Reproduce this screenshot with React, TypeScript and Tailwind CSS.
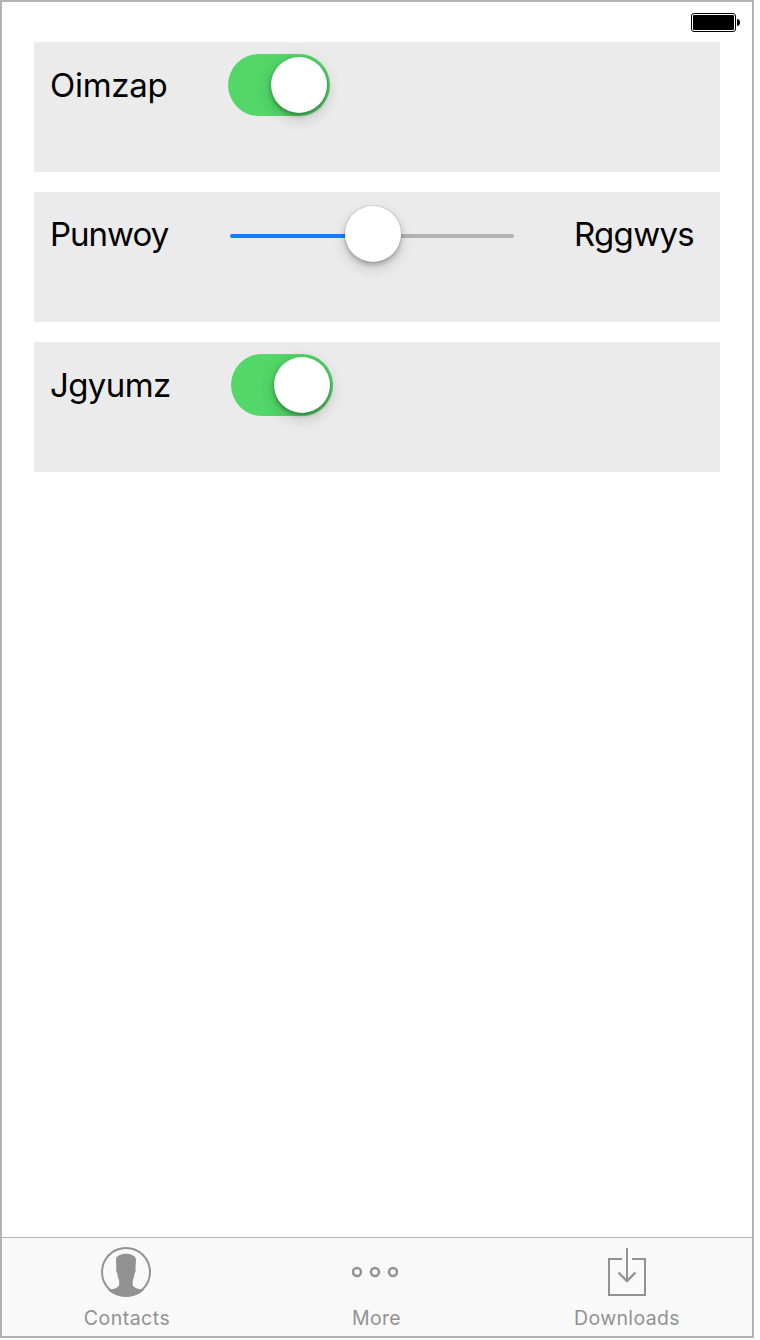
import React from "react";

function Toggle({ className = "" }: { className?: string }) {
  return (
    <div className={`flex h-[62px] w-[102px] shrink-0 items-center justify-end rounded-full bg-[#53d769] pr-[3px] ${className}`}>
      <div className="size-14 rounded-full bg-white shadow-[0_6px_16px_rgba(0,0,0,0.15),0_2px_4px_rgba(0,0,0,0.35),0_0_24px_rgba(0,0,0,0.04)]" />
    </div>
  );
}

function Slider() {
  return (
    <div className="ml-[180px] flex h-14 w-[284px] shrink-0 items-center">
      <div className="mt-1 h-1 w-[115px] rounded-l-full bg-[#157efb]" />
      <div className="z-10 size-14 shrink-0 rounded-full bg-white shadow-[0_6px_16px_rgba(0,0,0,0.15),0_3px_5px_rgba(0,0,0,0.24),0_0_1px_1px_rgba(0,0,0,0.06)]" />
      <div className="mt-1 h-1 flex-1 rounded-r-full bg-[#b2b2b2]" />
    </div>
  );
}

function Battery() {
  return (
    <svg className="h-[19px] w-[49px]" viewBox="0 0 49 19">
      <rect x="0.5" y="0.5" width="44" height="18" rx="2.5" fill="white" stroke="black" />
      <rect x="2" y="2" width="41" height="15" rx="1" fill="black" />
      <path d="M46 6c1.8 0 3 1.5 3 3.5S47.8 13 46 13Z" fill="black" />
    </svg>
  );
}

function ContactsIcon() {
  return (
    <svg className="size-[50px]" viewBox="0 0 50 50" fill="none">
      <circle cx="25" cy="25" r="24" stroke="#929292" strokeWidth="2" />
      <path
        d="M25 6.800C29.500 6.800 34 8.500 34.800 11.500C35.200 14.500 34.600 18 34.400 21.500C35.100 22.500 34.500 25 33.700 26.500C33.200 29.500 32.700 31.500 31.900 33C31.600 35 31.600 37.500 32 38.700C33.400 41 38 42.100 43 43C38 47.500 31.500 49.500 25 49.500S12 47.500 7 43C12 42.100 16.500 41 17.900 38.700C18.300 37.500 18.300 35 18 33C17.200 31.500 16.700 29.500 16.200 26.500C15.300 25 14.800 22.500 15.500 21.500C15.300 18 14.700 14.500 15.100 11.500C15.900 8.500 20.500 6.800 25 6.800Z"
        fill="#929292"
      />
    </svg>
  );
}

function MoreIcon() {
  return (
    <svg className="h-[50px] w-[46px]" viewBox="0 0 46 50" fill="none" stroke="#929292" strokeWidth="2.4">
      <circle cx="5" cy="25" r="4" />
      <circle cx="23" cy="25" r="4" />
      <circle cx="41" cy="25" r="4" />
    </svg>
  );
}

function DownloadsIcon() {
  return (
    <svg className="h-[50px] w-[38px]" viewBox="0 0 38 50" fill="none" stroke="#929292" strokeWidth="2">
      <path d="M14 12H1v36h36V12H24M19 1v33" />
      <path d="M10.500 25.500l8.500 8.500 8.500-8.500" strokeWidth="2.4" />
    </svg>
  );
}

function Tab({ label, className, labelClassName, children }: { label: string; className: string; labelClassName: string; children: React.ReactNode }) {
  return (
    <div className={`flex shrink-0 flex-col items-center pt-[9px] ${className}`}>
      {children}
      <span className={`mt-2 text-[19.500px] leading-[26px] whitespace-nowrap ${labelClassName}`}>{label}</span>
    </div>
  );
}

export default function App() {
  return (
    <div className="h-[1340px] w-[760px] bg-white font-['Inter',sans-serif]">
      <div className="flex h-[1338px] w-[754px] flex-col border-2 border-[#b2b2b2] bg-white">
        <header className="flex h-10 shrink-0 justify-end pt-[11px] pr-[12px]">
          <Battery />
        </header>
        <main className="flex flex-1 flex-col gap-5 px-8 text-[33px] leading-10 text-black">
          <section className="flex h-[130px] items-start bg-[#ebebeb] pt-3 pl-4">
            <span className="mt-[11px] w-0 whitespace-nowrap tracking-[-0.300px]">Oimzap</span>
            <Toggle className="ml-[178px]" />
          </section>
          <section className="flex h-[130px] items-start bg-[#ebebeb] pt-[14px] pl-4">
            <span className="mt-2 w-0 whitespace-nowrap tracking-[-1px]">Punwoy</span>
            <Slider />
            <span className="mt-2 ml-[60px] whitespace-nowrap tracking-[-0.700px]">Rggwys</span>
          </section>
          <section className="flex h-[130px] items-start bg-[#ebebeb] pt-3 pl-4">
            <span className="mt-[11px] w-0 whitespace-nowrap tracking-[-0.600px]">Jgyumz</span>
            <Toggle className="ml-[181px]" />
          </section>
        </main>
        <nav className="flex h-[99px] shrink-0 border-t border-[#b2b2b2] bg-[#f9f9f9] text-[#929292]">
          <Tab label="Contacts" className="w-[248px]" labelClassName="pl-[2px] tracking-[0.500px]"><ContactsIcon /></Tab>
          <Tab label="More" className="w-[250px]" labelClassName="pl-[3px] tracking-[0.300px]"><MoreIcon /></Tab>
          <Tab label="Downloads" className="-mr-0.5 w-[254px]" labelClassName="tracking-[0.350px]"><DownloadsIcon /></Tab>
        </nav>
      </div>
    </div>
  );
}
